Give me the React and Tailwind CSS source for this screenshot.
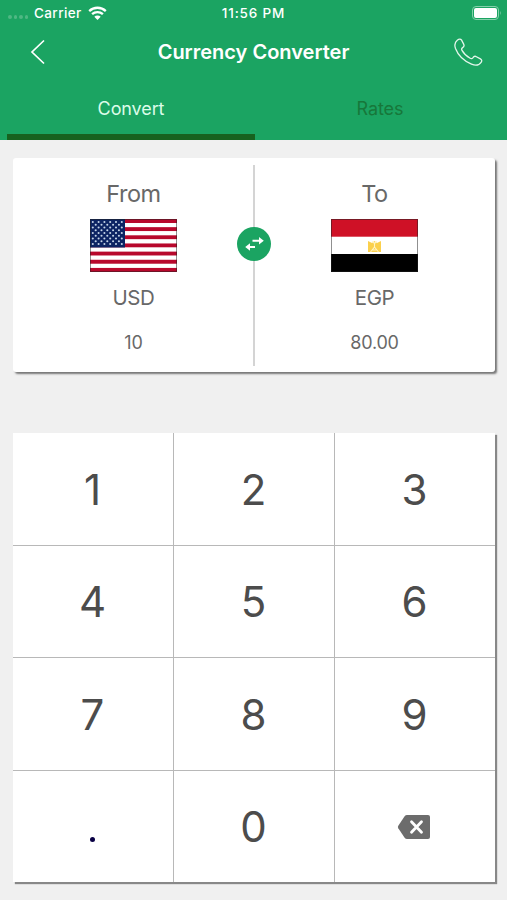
const stripes = Array.from({ length: 13 }, (_, i) => i);
const stars = Array.from({ length: 9 }, (_, r) =>
  Array.from({ length: r % 2 ? 5 : 6 }, (_, c) => [2.8 + (r % 2 ? 2.9 : 0) + c * 5.8, 3 + r * 2.75])
).flat();

function UsFlag() {
  return (
    <svg className="h-[53px] w-[87px]" viewBox="0 0 87 53">
      <rect width="87" height="53" fill="#fff" />
      {stripes.map((i) => (
        <rect key={i} y={i * 4.077} width="87" height="4.077" fill={i % 2 ? "#fff" : "#b8082c"} />
      ))}
      <rect width="35" height="28.5" fill="#0c2463" />
      {stars.map(([x, y], i) => (
        <circle key={i} cx={x} cy={y} r="1.05" fill="#c5d5e8" />
      ))}
      <rect x="0.5" y="0.5" width="86" height="52" fill="none" stroke="#222" strokeOpacity="0.5" />
    </svg>
  );
}

function EgyptFlag() {
  return (
    <svg className="h-[53px] w-[87px]" viewBox="0 0 87 53">
      <rect width="87" height="53" fill="#fff" />
      <rect width="87" height="17.7" fill="#cf1126" />
      <rect y="35" width="87" height="18" fill="#000" />
      <path d="M37 22l4 2 2.5-2 2.5 2 4-2v11H37z" fill="#fbd04c" />
      <path d="M41.3 22.5l2.2 2 2.2-2M43.5 24v4l-4 5M43.5 28l4 5M41 31h5" fill="none" stroke="#fff3c4" strokeWidth="1.1" />
      <rect x="0.5" y="0.5" width="86" height="52" fill="none" stroke="#222" strokeOpacity="0.5" />
    </svg>
  );
}

function CurrencyPanel({ label, code, amount, children }) {
  return (
    <div className="flex w-[241px] flex-col items-center text-[#686868]">
      <div className="mt-[20px] h-8 text-[23.5px] leading-8 tracking-[-0.5px]">{label}</div>
      <div className="mt-[9px] h-[53px]">{children}</div>
      <div className="mt-3 h-7 text-[20.5px] leading-7 tracking-[-0.4px]">{code}</div>
      <div className="mt-[19px] h-6 text-[18px] leading-6 tracking-[-0.2px]">{amount}</div>
    </div>
  );
}

function Backspace() {
  return (
    <svg className="mr-px mb-px h-[26px] w-[34px]" viewBox="0 0 34 26">
      <path d="M10 1h21q2 0 2 2v20q0 2-2 2H10q-1.400 0-2.200-1.100L1.300 14.200q-.8-1.200 0-2.400L7.800 2.100Q8.600 1 10 1z" fill="#6c6c6c" />
      <path d="M14.500 7.700l10 10.600m0-10.600l-10 10.600" stroke="#fff" strokeWidth="2.800" strokeLinecap="round" />
    </svg>
  );
}

const keys = ["1", "2", "3", "4", "5", "6", "7", "8", "9", ".", "0", "back"];

export default function App() {
  return (
    <div className="h-[900px] w-[507px] overflow-hidden bg-[#f0f0f0] font-['Inter','Liberation_Sans',sans-serif]">
      <header className="flex h-[140px] flex-col bg-[#1ba462] text-white">
        <div className="grid h-[26px] grid-cols-3 items-center text-[13.5px] font-medium">
          <div className="flex items-center pl-2">
            <div className="mt-2 flex gap-[2px]">
              {[0, 1, 2, 3].map((i) => (
                <span key={i} className="size-[3.5px] rounded-full bg-[#4fb883]" />
              ))}
            </div>
            <span className="ml-[6px] tracking-[0.4px]">Carrier</span>
            <svg className="ml-[6px] h-[14px] w-[19px]" viewBox="0 0 19 14">
              <path d="M1.200 5.100a12 12 0 0 1 16.600 0M4.100 8.200a7.800 7.800 0 0 1 10.800 0" fill="none" stroke="#fff" strokeWidth="2.300" />
              <path d="M6.300 10.700a4.600 4.600 0 0 1 6.400 0L9.500 14z" fill="#fff" />
            </svg>
          </div>
          <div className="text-center tracking-[0.85px]">11:56 PM</div>
          <svg className="ml-auto mr-1 h-[14px] w-[31px]" viewBox="0 0 31 14">
            <rect x="0.500" y="0.500" width="26" height="13" rx="3.500" fill="none" stroke="#84d0aa" />
            <rect x="2" y="2" width="23" height="10" rx="2" fill="#fff" />
            <path d="M28.300 4.800q1.600 2.200 0 4.400z" fill="#84d0aa" />
          </svg>
        </div>
        <div className="flex h-[52px] items-center justify-between pl-[30px] pr-6">
          <svg className="mr-[7px] h-[26px] w-4" viewBox="0 0 16 26">
            <path d="M14 1.500L2 13l12 11.500" fill="none" stroke="#fff" strokeWidth="1.700" />
          </svg>
          <h1 className="text-[20px] font-semibold">Currency Converter</h1>
          <svg className="h-7 w-[29px]" viewBox="0 0 29 28">
            <path d="M3.300 2.200C5 .9 6.600.7 7.600 2.200l2.200 4.200c.6 1.400.1 2.500-1.200 3.200-1.200.8-1.300 1.500-.6 2.800 2 3.600 4.600 6 8.200 7.900 1.100.6 1.900.5 2.600-.5 1-1.500 2.200-1.900 3.600-1.100l4 2.200c1.500.9 1.700 2 .7 3.400-2.100 3-5.600 3.500-9.600 1.800C10 23 3.900 16.800 1.500 10.500.3 7.100.8 4.200 3.300 2.200z" fill="none" stroke="#e4f6eb" strokeWidth="1.300" />
          </svg>
        </div>
        <nav className="flex h-[62px] pl-[7px] text-[18px] leading-[62px] tracking-[-0.1px]">
          <div className="h-full w-[248px] border-b-[6px] border-[#17621f] text-center text-[#dcfce9]">Convert</div>
          <div className="h-full w-[250px] text-center text-[#17773a]">Rates</div>
        </nav>
      </header>

      <main className="px-[13px] pt-[18px]">
        <section className="relative flex h-[214px] w-[482px] rounded-[3px] bg-white shadow-[2px_2px_2px_#777]">
          <CurrencyPanel label="From" code="USD" amount="10"><UsFlag /></CurrencyPanel>
          <CurrencyPanel label="To" code="EGP" amount="80.00"><EgyptFlag /></CurrencyPanel>
          <div className="absolute left-[240px] top-[7px] h-[201px] w-[2px] bg-[#d4d4d4]" />
          <button className="absolute left-[224px] top-[69px] size-[34px] rounded-full bg-[#1ba462]">
            <svg className="size-[34px]" viewBox="0 0 34 34">
              <path d="M15.500 13.800H23M18 20h-7" fill="none" stroke="#fff" strokeWidth="1.900" />
              <path d="M22 10l4.800 3.800-4.800 3.800zM13 16.200L8.200 20l4.800 3.800z" fill="#fff" />
            </svg>
          </button>
        </section>

        <section className="mt-[61px] grid h-[449px] w-[482px] grid-cols-3 grid-rows-4 gap-px bg-[#b8b8b8] shadow-[2px_2px_1px_#888]">
          {keys.map((k) => (
            <button key={k} className="flex items-center justify-center bg-white pt-[2px] pr-px text-[42px] leading-none text-[#4c4c4c]">
              {k === "back" ? <Backspace /> : k === "." ? <span className="mt-[25px] size-[5px] rounded-full bg-[#090044]" /> : k}
            </button>
          ))}
        </section>
      </main>
    </div>
  );
}
